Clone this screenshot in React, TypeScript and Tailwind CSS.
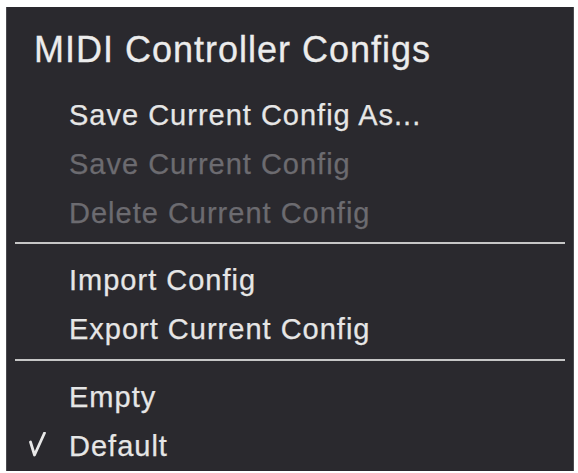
const items = [
  { label: "Save Current Config As...", disabled: false },
  { label: "Save Current Config", disabled: true },
  { label: "Delete Current Config", disabled: true },
];

const fileItems = [
  { label: "Import Config", disabled: false },
  { label: "Export Current Config", disabled: false },
];

const configs = [
  { label: "Empty", checked: false },
  { label: "Default", checked: true },
];

const Check = () => (
  <svg width="17" height="25" viewBox="0 0 17 25" className="block -mt-[4px]">
    <path d="M1.5 10 L5.5 23 L15.5 1" fill="none" stroke="#e8e8e8" strokeWidth="2.8" strokeLinejoin="round" strokeLinecap="round" />
  </svg>
);

const Row = ({ label, disabled, checked }: { label: string; disabled?: boolean; checked?: boolean }) => (
  <div className="flex h-[49px] items-center">
    <div className="w-[62px] pl-[22px] flex items-center">{checked && <Check />}</div>
    <span
      className={`text-[29px] leading-[49px] tracking-[1px] [-webkit-text-stroke:0.25px_currentColor] ${
        disabled ? "text-[#6c6b70]" : "text-[#e6e6e6]"
      }`}
    >
      {label}
    </span>
  </div>
);

const Separator = () => <div className="mx-2 h-[2px] bg-[#c6c6c6]" />;

export default function App() {
  return (
    <div
      className="w-[578px] h-[473px] bg-white pt-[7px] pl-[6px] pr-[4px]"
      style={{ fontFamily: '"Liberation Sans", Arial, sans-serif' }}
    >
      <div className="h-[464px] bg-[#2a292e] border-l border-r border-[#4a4a4e] pt-[25px] overflow-hidden">
        <div className="pl-[27px] text-[36px] leading-[36px] tracking-[1px] text-[#ececec] mb-[23px] [-webkit-text-stroke:0.3px_currentColor]">
          MIDI Controller Configs
        </div>
        {items.map((it) => (
          <Row key={it.label} label={it.label} disabled={it.disabled} />
        ))}
        <div className="mt-[4px] mb-[12px]">
          <Separator />
        </div>
        {fileItems.map((it) => (
          <Row key={it.label} label={it.label} disabled={it.disabled} />
        ))}
        <div className="mt-[5px] mb-[12px]">
          <Separator />
        </div>
        {configs.map((it) => (
          <Row key={it.label} label={it.label} checked={it.checked} />
        ))}
      </div>
    </div>
  );
}
